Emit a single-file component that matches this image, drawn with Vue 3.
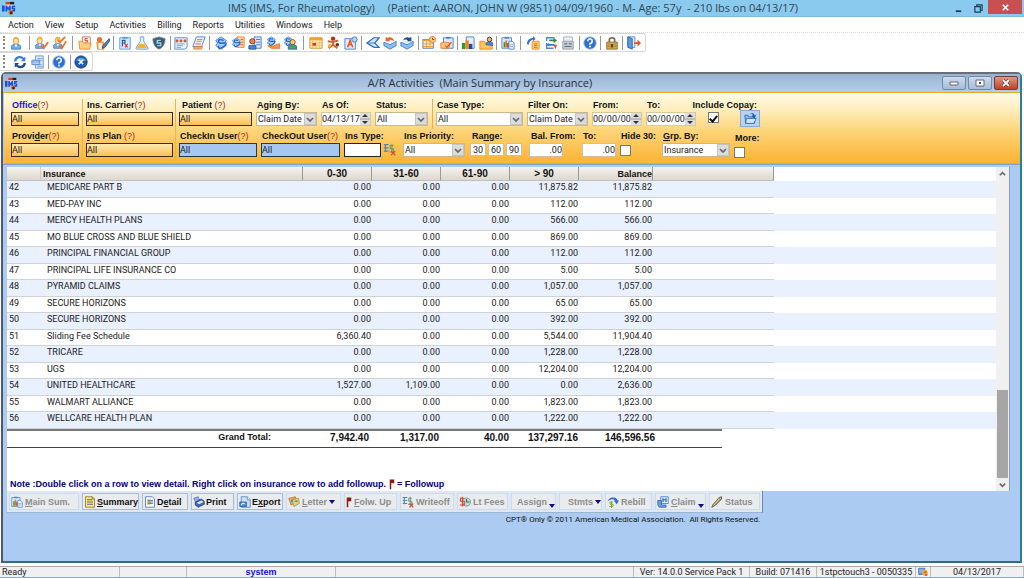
<script setup>
import { ref } from 'vue'

const menus = ['Action', 'View', 'Setup', 'Activities', 'Billing', 'Reports', 'Utilities', 'Windows', 'Help']

// '|' is a thin separator, '||' a separator with extra room
const tools = [
  'user', '||', 'userCheck', 'userCheck2', '||', 'folder', 'userPen', '|', 'rx', 'flask', 'shield', '|',
  'doc', 'pages', '|', 'dollar', 'dollarList', 'userCalc', 'dollarHand', 'dollarUser', '||',
  'calendar', 'figure', 'letterA', '|', 'arrowBox', 'mailOut', 'mailIn', '|', 'calClock', 'clip', '|',
  'chart', 'folderUser', '|', 'report', '||', 'copyDoc', 'transfer', 'fax', '|', 'help', '|', 'lock', '|', 'exit'
]
const tools2 = ['refresh', 'print', '|', 'help', '|', 'close']

const rows = [
  [42, 'MEDICARE PART B', '0.00', '0.00', '0.00', '11,875.82', '11,875.82'],
  [43, 'MED-PAY INC', '0.00', '0.00', '0.00', '112.00', '112.00'],
  [44, 'MERCY HEALTH PLANS', '0.00', '0.00', '0.00', '566.00', '566.00'],
  [45, 'MO BLUE CROSS AND BLUE SHIELD', '0.00', '0.00', '0.00', '869.00', '869.00'],
  [46, 'PRINCIPAL FINANCIAL GROUP', '0.00', '0.00', '0.00', '112.00', '112.00'],
  [47, 'PRINCIPAL LIFE INSURANCE CO', '0.00', '0.00', '0.00', '5.00', '5.00'],
  [48, 'PYRAMID CLAIMS', '0.00', '0.00', '0.00', '1,057.00', '1,057.00'],
  [49, 'SECURE HORIZONS', '0.00', '0.00', '0.00', '65.00', '65.00'],
  [50, 'SECURE HORIZONS', '0.00', '0.00', '0.00', '392.00', '392.00'],
  [51, 'Sliding Fee Schedule', '6,360.40', '0.00', '0.00', '5,544.00', '11,904.40'],
  [52, 'TRICARE', '0.00', '0.00', '0.00', '1,228.00', '1,228.00'],
  [53, 'UGS', '0.00', '0.00', '0.00', '12,204.00', '12,204.00'],
  [54, 'UNITED HEALTHCARE', '1,527.00', '1,109.00', '0.00', '0.00', '2,636.00'],
  [55, 'WALMART ALLIANCE', '0.00', '0.00', '0.00', '1,823.00', '1,823.00'],
  [56, 'WELLCARE HEALTH PLAN', '0.00', '0.00', '0.00', '1,222.00', '1,222.00']
]

// '&' marks the accelerator letter
const actions = [
  { text: '&Main Sum.', icon: 'report', off: true },
  { text: '&Summary', icon: 'note' },
  { text: 'D&etail', icon: 'detail' },
  { text: 'Print', icon: 'printer' },
  { text: 'E&xport', icon: 'export' },
  { text: '&Letter', icon: 'cards', off: true, drop: true },
  { text: '&Folw. Up', icon: 'flag', off: true },
  { text: 'Writeoff', icon: 'writeoff', off: true },
  { text: 'Lt Fees', icon: 'fees', off: true },
  { text: 'Assign', off: true, drop: true, low: true },
  { text: 'Stmts', off: true, drop: true },
  { text: 'Rebill', icon: 'rebill', off: true },
  { text: '&Claim', icon: 'claim', off: true, drop: true, low: true },
  { text: 'Status', icon: 'pencil', off: true }
].map(a => {
  const i = a.text.indexOf('&')
  return i < 0
    ? { ...a, pre: a.text, key: '', post: '' }
    : { ...a, pre: a.text.slice(0, i), key: a.text[i + 1], post: a.text.slice(i + 2) }
})

const copay = ref(true)
const hide30 = ref(false)
const more = ref(false)
</script>

<template>
  <svg class="defs" aria-hidden="true">
    <symbol id="g-ims" viewBox="0 0 16 16">
      <path d="M4 2h10v5H4z" fill="#e8edf8" /><path d="M4 1h5v3H4z" fill="#e03a20" /><path d="M9 1h5v3H9z" fill="#222" />
      <path d="M0 5h3v7H0zM4 5h2l1 3 1-3h2v7H8V9L7 11 6 9v3H4zM11 5h4v2h-2v1h2v4h-4v-2h2V9h-2z" fill="#1c50d8" />
      <circle cx="10" cy="13" r="2.6" fill="#e87820" /><path d="M9 12h3v3H9z" fill="#502010" />
    </symbol>
    <symbol id="g-user" viewBox="0 0 16 16">
      <path d="M3 15V11l3-2h4l3 2v4z" fill="#6fb0f0" stroke="#3a7cd0" /><path d="M7 9h2v3H7z" fill="#fff" />
      <ellipse cx="8" cy="5.5" rx="3" ry="4" fill="#ffe0a8" stroke="#d09038" /><path d="M5 4q0-3 3-3t3 3l-3-1z" fill="#f0b030" />
    </symbol>
    <symbol id="g-userCheck" viewBox="0 0 16 16">
      <use href="#g-user" x="-2" y="0" width="15" height="15" /><path d="M7 11l3 3 5-7" fill="none" stroke="#f0702c" stroke-width="2" />
    </symbol>
    <symbol id="g-userCheck2" viewBox="0 0 16 16">
      <use href="#g-user" x="-2" y="0" width="15" height="15" /><path d="M5 4l3 3 6-6M7 11l3 3 5-8" fill="none" stroke="#f0702c" stroke-width="2" />
    </symbol>
    <symbol id="g-folder" viewBox="0 0 16 16">
      <path d="M5 1h9v9H5z" fill="#fff" stroke="#e0603a" /><path d="M11 3H8v2h3v2H8" fill="none" stroke="#d03018" />
      <path d="M1 6h4l1 2h6l3 1-2 6H2z" fill="#ffd080" stroke="#f08828" />
    </symbol>
    <symbol id="g-userPen" viewBox="0 0 16 16">
      <path d="M1 7h8v8H2z" fill="#ffb868" stroke="#e07828" /><circle cx="4" cy="4" r="3" fill="#e8702c" /><path d="M3 8h4v7H3z" fill="#fff2d0" />
      <path d="M15 3l-7 8-1 3 3-1 6-8z" fill="#5080c0" stroke="#304870" />
    </symbol>
    <symbol id="g-rx" viewBox="0 0 16 16">
      <path d="M2 2h12v13H2z" fill="#d8e9fc" stroke="#5a96e0" /><path d="M5 1h6v2H5z" fill="#5a96e0" />
      <path d="M5 12V5h3v3H5" fill="none" stroke="#2050a0" stroke-width="1.3" /><path d="M7 8l4 5m0-4l-3 4" fill="none" stroke="#d83828" stroke-width="1.3" />
    </symbol>
    <symbol id="g-flask" viewBox="0 0 16 16">
      <path d="M6 1h4v5l5 8q0 1-1 1H2q-1 0-1-1l5-8z" fill="#e6f3ff" stroke="#5a96e0" /><path d="M5 9h6l3 5H2z" fill="#ffb02c" />
    </symbol>
    <symbol id="g-shield" viewBox="0 0 16 16">
      <path d="M1 3l7-2 7 2q0 9-7 12Q1 12 1 3z" fill="#3e5a70" stroke="#7c8a94" /><path d="M10 5H6v3h4v3H6" fill="none" stroke="#8fd8f0" stroke-width="1.6" />
    </symbol>
    <symbol id="g-doc" viewBox="0 0 16 16">
      <path d="M1 2h14v11l-3 2H1z" fill="#eaf3ff" stroke="#4a86d8" /><path d="M2 4h3v3H2zM6.500 4h3v3h-3zM11 4h3v3h-3z" fill="#d8552e" />
      <path d="M3 9h9M3 11h7M3 13h5" stroke="#6c9cdc" />
    </symbol>
    <symbol id="g-pages" viewBox="0 0 16 16">
      <path d="M5 1h10l-4 11H1z" fill="#e8f2ff" stroke="#3f7cd0" /><path d="M6 4h6M5 6h6M4 9h6" stroke="#f08050" stroke-width="1.2" /><path d="M2 12h10l-1 3H2z" fill="#f8a860" stroke="#c86a30" stroke-width=".6" />
    </symbol>
    <symbol id="g-dollar" viewBox="0 0 16 16">
      <path d="M8 1l6 4-2 3 2 3-6 4-6-4 2-3-2-3z" fill="#a4cdf8" stroke="#3a80dc" />
      <path d="M11 5Q5 3 5 6t6 2 0 4-6-1" fill="none" stroke="#1c62cc" stroke-width="1.600" />
    </symbol>
    <symbol id="g-dollarList" viewBox="0 0 16 16">
      <path d="M7 1h8v12H7z" fill="#ffd8a0" stroke="#f08030" /><path d="M11 4h3M11 7h3M11 10h3" stroke="#e05020" /><use href="#g-dollar" x="0" y="1" width="12" height="13" />
    </symbol>
    <symbol id="g-userCalc" viewBox="0 0 16 16">
      <path d="M7 1h8v13H7z" fill="#dbe9fa" stroke="#3c74c8" /><path d="M9 4h5M9 7h5M9 10h5" stroke="#3c74c8" />
      <circle cx="5" cy="6" r="3" fill="#e8834a" stroke="#803010" /><path d="M1 15v-4h8v4z" fill="#4a86e0" stroke="#2350a0" />
    </symbol>
    <symbol id="g-dollarHand" viewBox="0 0 16 16">
      <use href="#g-dollar" x="0" y="0" width="12" height="12" /><path d="M2 11l5 1 7-3h2v5H6z" fill="#f89848" stroke="#e86a20" />
    </symbol>
    <symbol id="g-dollarUser" viewBox="0 0 16 16">
      <use href="#g-dollar" x="0" y="0" width="12" height="12" /><circle cx="11" cy="7" r="3" fill="#ffc880" stroke="#9c4820" /><path d="M6 15v-3l3-2h4l3 2v3z" fill="#50a060" stroke="#2a62b8" />
    </symbol>
    <symbol id="g-calendar" viewBox="0 0 16 16">
      <path d="M1 2h14v12H1z" fill="#ffeab8" stroke="#e08a20" /><path d="M1 2h14v3H1z" fill="#f4a030" /><path d="M1 8h14M1 11h14M8 5v9M12 5v9M4 5v9" stroke="#eeb85c" stroke-width=".8" /><path d="M4 8h4v3H4z" fill="#d83c20" />
    </symbol>
    <symbol id="g-figure" viewBox="0 0 16 16">
      <circle cx="8" cy="3" r="2.500" fill="#b83018" /><path d="M2 6l6 1 6-2M8 7v4M3 14l5-4 5 4" fill="none" stroke="#e05828" stroke-width="2.200" /><circle cx="4" cy="11" r="2" fill="#f0b030" /><circle cx="13" cy="10" r="2" fill="#5a3a20" />
    </symbol>
    <symbol id="g-letterA" viewBox="0 0 16 16">
      <path d="M1 3h12v12H1z" fill="#e4effc" stroke="#3f7cd0" /><path d="M4 13l3-8 3 8M5 10h4" fill="none" stroke="#e05a20" stroke-width="1.700" /><circle cx="12" cy="4" r="3" fill="#bcd9f8" stroke="#3270c4" />
    </symbol>
    <symbol id="g-arrowBox" viewBox="0 0 16 16">
      <path d="M15 2H9L1 8l8 5h6l-5-5z" fill="#d4e6fb" stroke="#2c6cc8" stroke-width="1.400" /><path d="M1 8h9" stroke="#2c6cc8" />
    </symbol>
    <symbol id="g-mailOut" viewBox="0 0 16 16">
      <path d="M1 7l7 3 7-4v5l-7 4-7-4z" fill="#8cbef4" stroke="#3a78cc" /><path d="M3 6l5-3 6 3-6 3z" fill="#e4f1ff" /><path d="M3 6V1l2 1q6-2 8 4-4-3-6-1l1 1z" fill="#ee6428" />
    </symbol>
    <symbol id="g-mailIn" viewBox="0 0 16 16">
      <path d="M1 7l7 3 7-4v5l-7 4-7-4z" fill="#8cbef4" stroke="#3a78cc" /><path d="M3 6l5-3 6 3-6 3z" fill="#e4f1ff" /><path d="M13 6V1l-2 1Q6 0 3 5q4-2 6 0L8 6z" fill="#1e4e90" />
    </symbol>
    <symbol id="g-calClock" viewBox="0 0 16 16">
      <path d="M1 4h12v10H1z" fill="#fff0c4" stroke="#3c78cc" /><path d="M1 4h12v2H1z" fill="#f0a030" /><path d="M1 9h12M1 12h12M5 6v8M9 6v8" stroke="#e89838" /><circle cx="12" cy="4" r="3.500" fill="#ffd080" stroke="#e8701c" /><path d="M12 2v2h2" fill="none" stroke="#a03010" />
    </symbol>
    <symbol id="g-clip" viewBox="0 0 16 16">
      <path d="M4 2h11v12H4z" fill="#dceafc" stroke="#3f7cd0" /><path d="M7 1h5v2H7z" fill="#3f7cd0" /><path d="M1 8l5-1 6 1-2 6H1z" fill="#fac878" stroke="#f07a28" /><path d="M6 11l2 2 5-6" fill="none" stroke="#e0501c" stroke-width="1.500" />
    </symbol>
    <symbol id="g-chart" viewBox="0 0 16 16">
      <path d="M6 1h8l1 2v11H6z" fill="#e4effc" stroke="#3f7cd0" /><path d="M1 8h4v7H1z" fill="#2c9a3a" /><path d="M5 5h4v10H5z" fill="#f08820" /><path d="M9 9h4v6H9z" fill="#244a94" />
    </symbol>
    <symbol id="g-folderUser" viewBox="0 0 16 16">
      <path d="M1 6h5l1 2h8v7H1z" fill="#ffc458" stroke="#f08018" /><circle cx="12" cy="4" r="2.600" fill="#f8b070" stroke="#3a2820" /><path d="M8 10V8l3-1h3l2 1v3z" fill="#4a86e0" stroke="#2350a0" stroke-width=".7" />
    </symbol>
    <symbol id="g-report" viewBox="0 0 16 16">
      <path d="M1 2h11v12H1z" fill="#d9e8fb" stroke="#4a84d0" /><path d="M4 1h5v2H4z" fill="#4a84d0" /><path d="M3 7h2v6H3z" fill="#2c9a3a" /><path d="M5 5h2v8H5z" fill="#e8781c" /><path d="M7 8h2v5H7z" fill="#c83028" /><path d="M9 6h4l2 2v7H9z" fill="#eef5ff" stroke="#4a84d0" /><path d="M10 10h4M10 12h4" stroke="#80aae0" />
    </symbol>
    <symbol id="g-copyDoc" viewBox="0 0 16 16">
      <path d="M1 9q0-6 7-7V0l3 3-3 3V4Q4 5 3 10z" fill="#3474d0" /><path d="M7 6h8v9H7z" fill="#ffd070" stroke="#f08828" /><path d="M9 9h4M9 11h4M9 13h4" stroke="#d86020" />
    </symbol>
    <symbol id="g-transfer" viewBox="0 0 16 16">
      <path d="M12 2H3v4M3 8v6h8" fill="none" stroke="#4a88e0" stroke-width="1.500" /><path d="M6 4h5V2l4 3-4 3V6H6z" fill="#2c8c3c" /><path d="M12 9H6V8L2 10l4 2v-1h6z" fill="#3a78d0" /><path d="M11 10h4l-2 5z" fill="#e05020" />
    </symbol>
    <symbol id="g-fax" viewBox="0 0 16 16">
      <path d="M3 1h10v6H3z" fill="#eceff2" stroke="#a4acb4" /><path d="M2 6h12v9H2z" fill="#c2ccd6" stroke="#98a2ac" /><path d="M4 9h3M9 9h3M4 12h8" stroke="#60707c" stroke-width="1.300" />
    </symbol>
    <symbol id="g-help" viewBox="0 0 16 16">
      <circle cx="8" cy="8" r="7" fill="#2f70d4" stroke="#8ab0e0" /><path d="M5.500 6q0-2.500 2.500-2.500T10.500 6 8 8.500V10" fill="none" stroke="#fff" stroke-width="1.700" /><circle cx="8" cy="12" r="1.100" fill="#fff" />
    </symbol>
    <symbol id="g-lock" viewBox="0 0 16 16">
      <path d="M5 8V4q0-2 3-2t3 2v4" fill="none" stroke="#7c6c50" stroke-width="2" /><path d="M2 7h12v8H2z" fill="#d8a850" stroke="#8a6a30" /><path d="M3 10h10M3 12h10" stroke="#a88038" /><path d="M7 9h2v4H7z" fill="#503c18" />
    </symbol>
    <symbol id="g-exit" viewBox="0 0 16 16">
      <path d="M1 1h8v12H1z" fill="#eef4fc" stroke="#4a80cc" /><path d="M1 1l5 2v12l-5-2z" fill="#5c98e0" stroke="#2c60b0" /><path d="M8 7h4V4l4 4-4 4V9H8z" fill="#e05424" />
    </symbol>
    <symbol id="g-refresh" viewBox="0 0 16 16">
      <path d="M1 7q1-6 7-6 3 0 4 2l2-1v5H9l2-2q-2-2-5-1-2 1-2 3z" fill="#3c7cd8" /><path d="M15 9q-1 6-7 6-3 0-4-2l-2 1V9h5l-2 2q2 2 5 1 2-1 2-3z" fill="#1c4c98" />
    </symbol>
    <symbol id="g-print" viewBox="0 0 16 16">
      <path d="M5 1h9v14H5z" fill="#dfeafa" stroke="#6494d4" /><path d="M7 4h6M7 6h6M7 11h6M7 13h6" stroke="#7ca8e0" /><path d="M1 6h9v5H1z" fill="#b8d2f4" stroke="#5084cc" /><path d="M2 8h7" stroke="#3c70c0" stroke-dasharray="1 1" />
    </symbol>
    <symbol id="g-close" viewBox="0 0 16 16">
      <circle cx="8" cy="8" r="7" fill="#1c5cb8" stroke="#16365c" /><path d="M2 6q6-6 12 0-6 2-12 0z" fill="#58a8f0" /><path d="M5.500 5.500l5 5m0-5l-5 5" stroke="#fff" stroke-width="1.800" />
    </symbol>
    <symbol id="g-note" viewBox="0 0 16 16">
      <path d="M2 1h9l3 3v11H2z" fill="#ffe680" stroke="#806c20" /><path d="M4 5h7M4 8h8M4 11h8" stroke="#3c5ca0" stroke-width="1.200" /><path d="M11 1v3h3" fill="none" stroke="#806c20" />
    </symbol>
    <symbol id="g-detail" viewBox="0 0 16 16">
      <path d="M2 1h9l3 3v11H2z" fill="#f4f8ff" stroke="#3c6cb8" /><path d="M4 4h5v8H4z" fill="#f0d860" /><path d="M5 6h7M5 8h7M5 10h7" stroke="#3464b4" />
    </symbol>
    <symbol id="g-printer" viewBox="0 0 16 16">
      <path d="M1 3l6-2 2 6-5 3z" fill="#90b4e8" stroke="#4a74b4" /><path d="M3 8l8-4 4 3v4l-8 4-4-3z" fill="#3c68b4" stroke="#203c78" /><path d="M5 9l6-3 3 2-6 3z" fill="#dfeaf8" />
    </symbol>
    <symbol id="g-export" viewBox="0 0 16 16">
      <path d="M3 1h8l4 4v10H3z" fill="#cfe2fa" stroke="#3c78cc" /><path d="M1 8h9v6H1z" fill="#4a88dc" stroke="#265cac" /><path d="M3 12q2-4 5-1" fill="none" stroke="#fff" stroke-width="1.400" /><path d="M11 1v4h4" fill="#fff" stroke="#3c78cc" />
    </symbol>
    <symbol id="g-cards" viewBox="0 0 16 16">
      <path d="M1 3l9-2 1 8-7 3z" fill="#f0a850" stroke="#b87028" /><path d="M5 5l9-2 1 7-7 4z" fill="#e8d088" stroke="#a88838" /><path d="M4 5h3v3H4z" fill="#48a0c0" /><path d="M9 6h4v2H9z" fill="#58a048" />
    </symbol>
    <symbol id="g-flag" viewBox="0 0 8 16">
      <path d="M1 2h6v5H3v8H1z" fill="#8c1a10" />
    </symbol>
    <symbol id="g-writeoff" viewBox="0 0 16 16">
      <path d="M1 2h6M1 6h6M1 10h6M3 2v9" stroke="#5884b4" stroke-width="1.500" /><path d="M13 3H9v4h4v4H8M11 1v11" fill="none" stroke="#5c9c74" stroke-width="1.300" /><path d="M10 10l5 5m0-5l-5 5" stroke="#d04a30" stroke-width="1.500" />
    </symbol>
    <symbol id="g-fees" viewBox="0 0 16 16">
      <circle cx="10" cy="8" r="5.500" fill="#b8dcd8" stroke="#6c9494" /><path d="M10 4v4h4" fill="none" stroke="#406868" stroke-width="1.400" /><path d="M7 3H2v4h5v5H1M4.500 1v13" fill="none" stroke="#d8442c" stroke-width="1.500" />
    </symbol>
    <symbol id="g-rebill" viewBox="0 0 16 16">
      <path d="M1 7q2-6 8-5 4 0 5 4h2l-3 5-4-5h2Q7 2 1 7z" fill="#2c6ccc" /><path d="M8 8H4v3h4v3H3M6 7v9" fill="none" stroke="#88a838" stroke-width="1.300" />
    </symbol>
    <symbol id="g-claim" viewBox="0 0 16 16">
      <path d="M5 1h10v9H5z" fill="#dceafc" stroke="#3470c8" /><path d="M8 3v5M12 3v5M8 5h4" stroke="#2460b8" stroke-width="1.500" /><path d="M1 6h5v6h6v3H3L1 12z" fill="#6ca0e4" stroke="#2c5cac" />
    </symbol>
    <symbol id="g-pencil" viewBox="0 0 16 16">
      <path d="M14 1l-3 1-8 9-2 4 4-2 9-9z" fill="#f0c040" stroke="#28415c" /><path d="M11 3l2 2-7 7" fill="none" stroke="#3c78b0" stroke-width="1.300" />
    </symbol>
    <symbol id="g-open" viewBox="0 0 16 16">
      <path d="M1 4h4l1 2h7v8H2z" fill="#8cbcf4" stroke="#2464c4" /><path d="M3 8h12l-3 6H2z" fill="#d2e7ff" stroke="#2464c4" /><path d="M7 3q4-4 6 1l2-1-2 5-4-3 2-1q-1-3-4-1z" fill="#1858b8" />
    </symbol>
    <symbol id="g-db" viewBox="0 0 16 16">
      <path d="M1 2h10v10H1z" fill="#5c98ec" stroke="#2c64bc" /><path d="M2 5h8M2 8h8" stroke="#dbe9ff" /><circle cx="11" cy="9" r="4.500" fill="#f0b030" /><path d="M9 7h5v2H9zM11 11h4v3h-4z" fill="#d8502c" />
    </symbol>
    <symbol id="g-down" viewBox="0 0 10 10"><path d="M2 4l3 3 3-3" fill="none" stroke="#666" stroke-width="1.700" /></symbol>
    <symbol id="g-up" viewBox="0 0 10 10"><path d="M2 7l3-3 3 3" fill="none" stroke="#666" stroke-width="1.700" /></symbol>
    <symbol id="g-spin" viewBox="0 0 10 12"><path d="M5 1l3 3H2zM5 11l3-3H2z" fill="#333" /><path d="M0 6h10" stroke="#999" /></symbol>
  </svg>

  <div class="app">
    <header class="titlebar">
      <svg class="logo"><use href="#g-ims" /></svg>
      <h1><span>IMS (IMS, For Rheumatology)</span><span>(Patient: AARON, JOHN W (9851) 04/09/1960 - M- Age: 57y&nbsp; - 210 lbs on 04/13/17)</span></h1>
      <div class="winbtns">
        <button aria-label="Minimize"><svg viewBox="0 0 10 10"><path d="M2 7h6v2H2z" fill="#1d3f55" /></svg></button>
        <button aria-label="Restore"><svg viewBox="0 0 10 10"><path d="M3 3V1h6v6H7M1 3h6v6H1z" fill="none" stroke="#1d3f55" stroke-width="1.300" /></svg></button>
        <button class="red" aria-label="Close"><svg viewBox="0 0 10 10"><path d="M2 2l6 6m0-6L2 8" stroke="#fff" stroke-width="1.800" /></svg></button>
      </div>
    </header>

    <nav class="menubar"><button v-for="m in menus" :key="m">{{ m }}</button></nav>

    <div class="toolrows">
      <div class="toolbar main">
        <i class="grip"></i>
        <template v-for="(t, i) in tools" :key="i">
          <i v-if="t[0] === '|'" class="sep" :class="{ wide: t === '||' }"></i>
          <button v-else :aria-label="t"><svg><use :href="'#g-' + t" /></svg></button>
        </template>
      </div>
      <div class="toolbar second">
        <i class="grip"></i>
        <template v-for="(t, i) in tools2" :key="i">
          <i v-if="t[0] === '|'" class="sep"></i>
          <button v-else :aria-label="t"><svg><use :href="'#g-' + t" /></svg></button>
        </template>
      </div>
    </div>

    <main class="child">
      <div class="childbar">
        <svg class="logo"><use href="#g-ims" /></svg>
        <h2>A/R Activities&nbsp; (Main Summary by Insurance)</h2>
        <div class="childbtns">
          <button aria-label="Minimize window"><svg viewBox="0 0 12 8"><path d="M2 3h8v3H2z" fill="#fff" stroke="#667" /></svg></button>
          <button aria-label="Maximize window"><svg viewBox="0 0 12 8"><path d="M2 1h8v6H2z" fill="#fff" stroke="#667" /><path d="M5 3h2v2H5z" fill="#556" /></svg></button>
          <button class="red" aria-label="Close window"><svg viewBox="0 0 12 8"><path d="M3 1l6 6m0-6L3 7" stroke="#5a2020" stroke-width="3" /><path d="M3 1l6 6m0-6L3 7" stroke="#fff" stroke-width="1.800" /></svg></button>
        </div>
      </div>

      <form class="filters" @submit.prevent>
        <div class="pair office">
          <div class="field"><label for="office"><span class="link">Office</span><em>(?)</em></label><input id="office" class="gold" value="All"></div>
          <div class="field"><label for="provider">Provi<u>d</u>er<em>(?)</em></label><input id="provider" class="gold" value="All"></div>
        </div>
        <div class="pair carrier">
          <div class="field"><label for="carrier">Ins. Carrier<em>(?)</em></label><input id="carrier" class="gold" value="All"></div>
          <div class="field"><label for="plan"><u>I</u>ns Plan <em>(?)</em></label><input id="plan" class="gold" value="All"></div>
        </div>
        <div class="rest">
          <div class="line one">
            <div class="field"><label class="indent" for="patient">Patient <em>(?)</em></label><input id="patient" class="gold" value="All"></div>
            <div class="field"><label for="aging">Aging By:</label><span class="pick"><select id="aging"><option>Claim Date</option></select><svg><use href="#g-down" /></svg></span></div>
            <div class="field"><label for="asof">As Of:</label><span class="date"><input id="asof" value="04/13/17"><button aria-label="Change as-of date"><svg><use href="#g-spin" /></svg></button></span></div>
            <div class="field"><label for="status">Status:</label><span class="pick"><select id="status"><option>All</option></select><svg><use href="#g-down" /></svg></span></div>
            <div class="field divided"><label for="case">Case Type:</label><span class="pick"><select id="case"><option>All</option></select><svg><use href="#g-down" /></svg></span></div>
            <div class="field"><label for="filter">Filter On:</label><span class="pick"><select id="filter"><option>Claim Date</option></select><svg><use href="#g-down" /></svg></span></div>
            <div class="field"><label for="from">From:</label><span class="date"><input id="from" value="00/00/00"><button aria-label="Change from date"><svg><use href="#g-spin" /></svg></button></span></div>
            <div class="field"><label for="to">To:</label><span class="date"><input id="to" value="00/00/00"><button aria-label="Change to date"><svg><use href="#g-spin" /></svg></button></span></div>
            <div class="field copay">
              <label for="copay">Include Copay:</label>
              <span class="copayrow"><input id="copay" v-model="copay" type="checkbox"><button class="openbtn" aria-label="Retrieve"><svg><use href="#g-open" /></svg></button></span>
            </div>
          </div>
          <div class="line two">
            <div class="field"><label for="cin">CheckIn User<em>(?)</em></label><input id="cin" class="blue" value="All"></div>
            <div class="field"><label for="cout">CheckOut User<em>(?)</em></label><input id="cout" class="blue" value="All"></div>
            <div class="field"><label for="itype">Ins Type:</label><span class="withicon"><input id="itype" class="framed" value=""><svg><use href="#g-writeoff" /></svg></span></div>
            <div class="field"><label for="prio">Ins Priority:</label><span class="pick"><select id="prio"><option>All</option></select><svg><use href="#g-down" /></svg></span></div>
            <div class="field"><label class="indent" for="r1">Ra<u>n</u>ge:</label><span class="range"><input id="r1" value="30"><input aria-label="Second range" value="60"><input aria-label="Third range" value="90"></span></div>
            <div class="field bal"><label for="bfrom">Bal. From:</label><input id="bfrom" class="amount" value=".00"></div>
            <div class="field"><label for="bto">To:</label><input id="bto" class="amount" value=".00"></div>
            <div class="field"><label for="hide">Hide 30:</label><input id="hide" v-model="hide30" type="checkbox"></div>
            <div class="field"><label for="grp"><u>G</u>rp. By:</label><span class="pick"><select id="grp"><option>Insurance</option></select><svg><use href="#g-down" /></svg></span></div>
            <div class="field more"><label for="more">More:</label><input id="more" v-model="more" type="checkbox"></div>
          </div>
        </div>
      </form>

      <div class="body">
        <section class="sheet">
          <div class="content">
            <table>
              <colgroup><col class="c-no"><col class="c-name"><col class="c-amt"><col class="c-amt"><col class="c-amt"><col class="c-amt"><col class="c-bal"><col class="c-pad"><col></colgroup>
              <thead>
                <tr><th></th><th class="name">Insurance</th><th class="num">0-30</th><th class="num">31-60</th><th class="num">61-90</th><th class="num">&gt; 90</th><th class="balance">Balance</th><th></th><td></td></tr>
              </thead>
              <tbody>
                <tr v-for="r in rows" :key="r[0]"><td v-for="(c, i) in r" :key="i">{{ c }}</td><td></td><td></td></tr>
              </tbody>
            </table>
            <div class="totals">
              <b>Grand Total:</b><span>7,942.40</span><span>1,317.00</span><span>40.00</span><span>137,297.16</span><span>146,596.56</span>
            </div>
            <p class="note">Note :Double click on a row to view detail. Right click on insurance row to add followup.  <svg><use href="#g-flag" /></svg> = Followup</p>
          </div>
          <div class="scroll">
            <svg><use href="#g-up" /></svg><i></i><svg><use href="#g-down" /></svg>
          </div>
        </section>
        <div class="actions">
          <button v-for="a in actions" :key="a.text" :class="{ off: a.off, bare: !a.icon }">
            <svg v-if="a.icon" :class="{ slim: a.icon === 'flag' }"><use :href="'#g-' + a.icon" /></svg>
            <span>{{ a.pre }}<u>{{ a.key }}</u>{{ a.post }}</span>
            <i v-if="a.drop" class="tri" :class="{ low: a.low }"></i>
          </button>
        </div>
        <p class="cpt">CPT® Only © 2011 American Medical Association.&nbsp; All Rights Reserved.</p>
      </div>
    </main>

    <footer class="statusbar">
      <span>Ready</span><span></span><span class="sys">system</span><span></span>
      <span>Ver: 14.0.0 Service Pack 1</span><span>Build: 071416</span><span>1stpctouch3 - 0050335</span>
      <span><svg><use href="#g-db" /></svg></span><span>04/13/2017</span>
    </footer>
  </div>
</template>

<style>
html, body { margin: 0; }
body { overflow: hidden; }
</style>

<style scoped>
* { box-sizing: border-box; }
.defs { display: none; }
.app { height: 100vh; display: flex; flex-direction: column; background: #fff; font-family: Roboto, "Liberation Sans", sans-serif; font-size: 9px; color: #222; }
button, input, select { font: inherit; color: inherit; margin: 0; padding: 0; border: 0; border-radius: 0; background: none; min-width: 0; }
svg { display: block; flex: none; }
h1, h2, p { margin: 0; font-weight: normal; }
i, em { font-style: normal; }

.titlebar { height: 17px; flex: none; display: grid; grid-template-columns: 1fr auto 1fr; align-items: center; background: #8acaee; border-bottom: 1px solid #7ab8dc; padding-left: 2px; }
.logo { width: 14px; height: 14px; }
h1 { display: flex; gap: 13px; font: 11px/16px "Open Sans", sans-serif; color: #2e4654; white-space: nowrap; }
.winbtns { display: flex; height: 16px; justify-content: flex-end; }
.winbtns button { width: 20px; display: flex; justify-content: center; align-items: center; }
.winbtns button.red { width: 34px; height: 14px; background: #c75050; margin-right: 2px; }
.winbtns svg { width: 9px; height: 9px; }

.menubar { height: 16px; flex: none; display: flex; gap: 11px; padding-left: 8px; border-bottom: 1px dotted #ddd; line-height: 14px; }

.toolrows { height: 39px; flex: none; }
.toolbar { height: 19px; display: flex; align-items: center; justify-content: space-between; border: 1px solid #d8d8d8; border-left: 0; border-radius: 0 3px 3px 0; padding: 0 4px 0 3px; }
.toolbar.main { width: 646px; }
.toolbar.second { width: 93px; }
.second .grip { margin-right: 4px; }
.toolbar svg { width: 14px; height: 14px; }
.grip { width: 3px; height: 13px; border-left: 2px dotted #888; }
.sep { width: 1px; height: 14px; background: #999; }
.sep.wide { margin: 0 2px; }

.child { flex: 1; min-height: 0; display: flex; flex-direction: column; border: 2px solid #4f5a66; border-top: 2px solid #6a6d74; border-right-color: #2c7f8f; border-bottom-color: #2c6f80; border-radius: 5px 5px 0 0; margin: 0 2px 3px 1px; background: #abcbf3; }
.childbar { height: 19px; flex: none; display: flex; align-items: center; padding: 0 2px; background: linear-gradient(#98b3d3, #b6cde8); border-bottom: 1px solid #e8a830; }
h2 { flex: 1; text-align: center; font: 11px/16px "Open Sans", sans-serif; color: #26313c; }
.childbar .logo { width: 13px; height: 13px; }
.childbtns { display: flex; gap: 2px; }
.childbtns button { width: 24px; height: 14px; border: 1px solid #7389a4; border-radius: 2px; background: linear-gradient(#cddcee, #a4bcda); display: flex; align-items: center; justify-content: center; }
.childbtns button.red { background: linear-gradient(#e09880, #c04028); border-color: #7a3a34; }
.childbtns svg { width: 12px; height: 8px; }

.filters { height: 71px; flex: none; display: flex; margin-left: 1px; padding: 6px 0 0 7px; background: linear-gradient(#fffbe6, #fff0c4 20%, #fcd477 55%, #fcb63a 95%); border-bottom: 1px solid #f0a820; }
.pair { display: flex; flex-direction: column; border-right: 1px solid #e8b850; height: 62px; padding-right: 3px; }
.office { width: 72px; }
.carrier { width: 93px; padding-left: 3px; padding-right: 2px; }
.pair .field { height: 31px; }
.rest { padding-left: 3px; }
.line { display: grid; column-gap: 4px; height: 31px; }
.one { grid-template-columns: 73px 61px 50px 53px 91px 61px 50px 50px 60px; }
.two { grid-template-columns: 78px 79px 55px 62px 53px 52px 34px 38px 68px 26px; }
.field { display: flex; flex-direction: column; align-items: flex-start; }
.field label { font-family: "Liberation Sans", Arial, sans-serif; line-height: 13px; height: 13px; font-weight: bold; color: #111; white-space: nowrap; padding-left: 1px; }
.field label.indent { padding-left: 3px; }
.field em { font-weight: normal; color: #b02a1a; }
.field .link { color: #1414e8; }
.field > input:not([type=checkbox]), .pick, .date, .withicon, .range { width: 100%; height: 14px; }
input.gold { border: 1px solid #3a2c10; background: linear-gradient(#fdeab4, #fbbf52); }
input.blue { border: 1px solid #22364c; background: #a5c8f2; }
input.framed { border: 1px solid #222; background: #fff; width: 37px; height: 14px; }
.pick { position: relative; display: block; }
.pick select { appearance: none; width: 100%; height: 14px; background: #fff; border: 1px solid #c8b890; padding: 0 14px 0 1px; line-height: 12px; }
.pick svg { position: absolute; right: 1px; top: 1px; width: 12px; height: 12px; background: #dcdcdc; border: 1px solid #c4c4c4; pointer-events: none; }
.date { display: flex; background: #fff; border: 1px solid #d8c8a0; }
.date input { flex: 1; width: 0; }
.date button { width: 10px; background: #dedede; }
.date svg { width: 10px; height: 12px; }
.divided { border-left: 1px solid #e0b458; padding-left: 3px; height: 30px; }
input[type=checkbox] { appearance: none; width: 11px; height: 11px; background: #fff; border: 1px solid #777; display: grid; place-items: center; }
input[type=checkbox]:checked::after { content: ""; width: 3px; height: 6px; border: solid #111; border-width: 0 2px 2px 0; transform: rotate(40deg); }
.field > input[type=checkbox] { margin-top: 2px; }
.copay { align-items: flex-end; }
.copay label { padding-right: 3px; }
.copayrow { width: 52px; display: flex; justify-content: space-between; }
.openbtn { width: 20px; height: 17px; margin-top: -2px; background: #b9d2f0; border: 1px solid #8aa8cc; display: flex; align-items: center; justify-content: center; }
.openbtn svg { width: 13px; height: 13px; }
.withicon { display: flex; gap: 2px; }
.withicon svg { width: 13px; height: 13px; }
.range { display: flex; gap: 2px; padding-left: 1px; }
.range input { width: 16px; height: 13px; text-align: center; background: #fff; border: 1px solid #d0c0a0; }
input.amount { background: #fff; border: 1px solid #d0c0a0; text-align: right; }
.field.bal input.amount { width: 34px; margin-left: 3px; }
.field.bal label { padding-left: 5px; }
.more { padding-top: 2px; }

.body { flex: 1; min-height: 0; padding: 2px 10px 0 4px; border-top: 1px solid #7fa3cf; }
.sheet { height: 324px; display: flex; background: #fff; border-right: 1px solid #8a9ab0; }
.content { flex: 1; min-width: 0; }
table { width: 100%; height: 262px; border-collapse: separate; border-spacing: 0; table-layout: fixed; }
.c-no { width: 34px; } .c-name { width: 262px; } .c-amt { width: 69px; } .c-bal { width: 74px; } .c-pad { width: 121px; }
thead tr { height: 14px; }
th { padding: 0; font: bold 9px/12px "Liberation Sans", Arial, sans-serif; color: #111; background: linear-gradient(#f6f4f0, #dcd8d0); border-right: 1px solid #9a9a96; border-bottom: 1px solid #c4c0b8; }
th.num { font-size: 10px; }
th.name { text-align: left; padding-left: 2px; }
th.balance { text-align: right; }
th:first-child { border-right-color: #d0ccc4; }
td { padding: 0; line-height: 12px; white-space: nowrap; text-align: right; vertical-align: top; }
tbody td:first-child { text-align: left; padding-left: 2px; }
tbody td:nth-child(2) { text-align: left; padding-left: 6px; }
tbody td:nth-child(n + 3) { padding-right: 1px; }
tbody td:not(:last-child) { border-bottom: 1px solid #cfd2d6; }
tbody tr:nth-child(odd) { background: #e9f0fe; }
.totals { width: 715px; height: 19px; display: grid; grid-template-columns: 264px 98px 70px 70px 69px 77px; border-top: 2px solid #777; border-bottom: 1px solid #444; font: bold 10px/13px "Liberation Sans", Arial, sans-serif; color: #111; text-align: right; }
.totals b { font-size: 9px; }
.note { display: flex; align-items: center; padding: 29px 0 0 3px; font: bold 9px/14px "Liberation Sans", Arial, sans-serif; color: #000080; white-space: pre; }
.note svg { width: 6px; height: 12px; }
.scroll { width: 13px; flex: none; background: #f0f0f0; display: flex; flex-direction: column; align-items: center; }
.scroll svg { width: 9px; height: 13px; }
.scroll i { width: 11px; height: 88px; margin-top: auto; background: #a6a6a6; }

.actions { width: 756px; height: 22px; padding: 2px; display: grid; column-gap: 3px; grid-template-columns: 70px 57px 46px 43px 46px 55px 53px 54px 51px 45px 43px 47px 51px 51px; background: #dbe8f8; border-right: 1px solid #6d88ac; border-bottom: 1px solid #9cb4d0; }
.actions button { display: flex; align-items: center; gap: 1px; padding: 0 0 0 1px; background: #e9ebee; border: 1px solid #b4bac4; font: bold 9px/14px "Liberation Sans", Arial, sans-serif; color: #111; white-space: nowrap; }
.actions button.off { color: #8c8c8c; border-color: #d4dae2; gap: 2px; }
.actions button.bare { justify-content: flex-end; }
.actions svg { width: 12px; height: 12px; }
.actions svg.slim { width: 6px; }
.tri { border: 3px solid transparent; border-top: 4px solid #0a0a90; border-bottom: 0; }
.tri.low { margin-top: 8px; }
.cpt { width: 753px; text-align: right; font-size: 8px; line-height: 13px; color: #111; }

.statusbar { height: 12px; flex: none; display: grid; grid-template-columns: 120px 67px 149px 1fr 116px 67px 99px 15px 93px; background: #f0f0f0; border-top: 1px solid #a8a8a8; border-bottom: 1px solid #8fb0c4; line-height: 10px; text-align: center; }
.statusbar span { border-right: 1px solid #bbb; white-space: nowrap; }
.statusbar span:first-child { text-align: left; padding-left: 2px; }
.statusbar svg { width: 12px; height: 10px; margin: 0 auto; }
.statusbar .sys { color: #1010e0; font-family: "Liberation Sans", Arial, sans-serif; font-weight: bold; }
</style>
